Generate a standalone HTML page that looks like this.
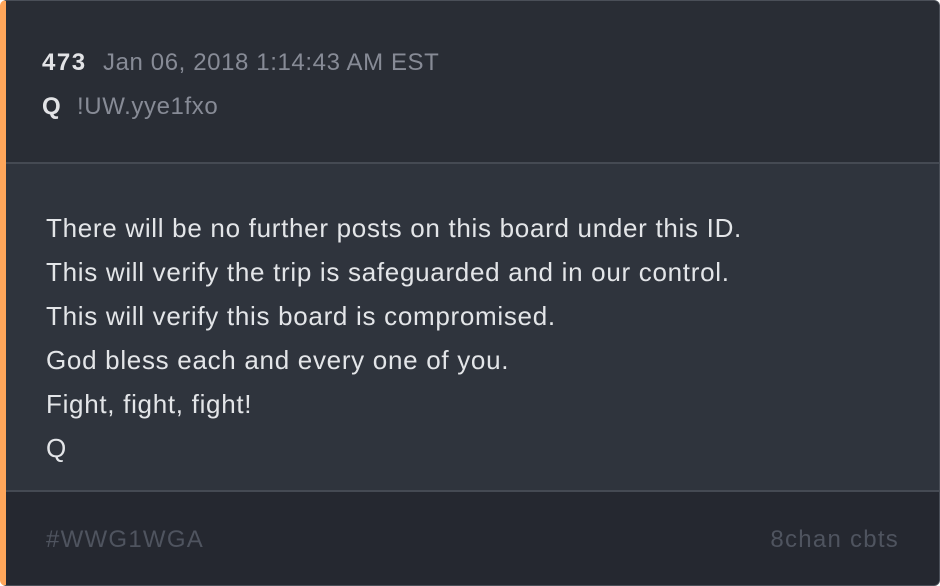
<!DOCTYPE html>
<html><head><style>
html,body{margin:0;padding:0;background:#fff;}
.card{position:absolute;left:0;top:0;width:940px;height:586px;box-sizing:border-box;border-radius:6px;overflow:hidden;background:#282c34;border:1px solid #4a4f58;border-left:6px solid #ffa65a;font-family:"Liberation Sans",sans-serif;}
.hd{position:absolute;left:0;top:0;right:0;height:161px;background:#292d35;border-bottom:2px solid #454a53;}
.bd{position:absolute;left:0;top:163px;right:0;height:326px;background:#2f343d;border-bottom:2px solid #454a53;}
.ft{position:absolute;left:0;top:491px;right:0;bottom:0;background:#252830;}
.t{position:absolute;white-space:nowrap;}
.n{font-weight:bold;color:#e2e3e6;font-size:24px;}
.g{color:#878b96;font-size:24px;letter-spacing:0.6px;}
.line{color:#e3e5e8;font-size:26px;letter-spacing:0.7px;left:40px;}
.f{color:#4f545f;font-size:24px;letter-spacing:1.25px;}
</style></head><body>
<div class="card">
<div class="hd">
<div class="t n" style="left:36px;top:48px;letter-spacing:1.5px">473</div>
<div class="t g" style="left:97px;top:48px">Jan 06, 2018 1:14:43 AM EST</div>
<div class="t n" style="left:36px;top:92px">Q</div>
<div class="t g" style="left:71px;top:92px">!UW.yye1fxo</div>
</div>
<div class="bd">
<div class="t line" style="top:49px">There will be no further posts on this board under this ID.</div>
<div class="t line" style="top:93px">This will verify the trip is safeguarded and in our control.</div>
<div class="t line" style="top:137px">This will verify this board is compromised.</div>
<div class="t line" style="top:181px">God bless each and every one of you.</div>
<div class="t line" style="top:225px">Fight, fight, fight!</div>
<div class="t line" style="top:269px">Q</div>
</div>
<div class="ft">
<div class="t f" style="left:40px;top:34px">#WWG1WGA</div>
<div class="t f" style="right:40px;top:34px">8chan cbts</div>
</div>
</div>
</body></html>
